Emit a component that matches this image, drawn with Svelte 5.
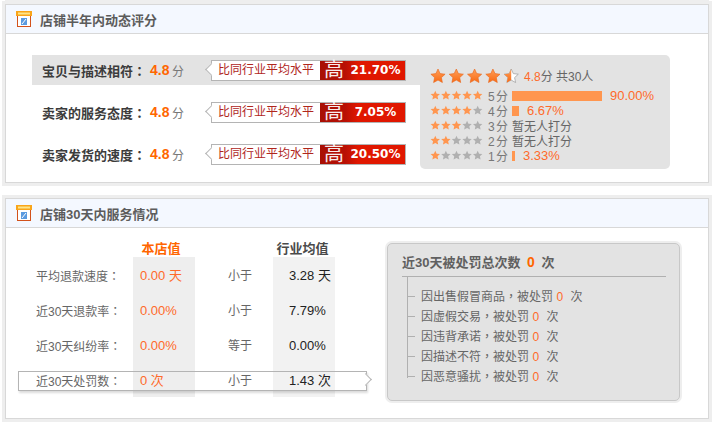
<script>
  const scores = [
    { name: '宝贝与描述相符', rate: '21.70%', active: true },
    { name: '卖家的服务态度', rate: '7.05%' },
    { name: '卖家发货的速度', rate: '20.50%' }
  ];
  const dist = [
    { n: 5, bar: 90, pct: '90.00%' },
    { n: 4, bar: 7, pct: '6.67%' },
    { n: 3 },
    { n: 2 },
    { n: 1, bar: 3, pct: '3.33%' }
  ];
  const stats = [
    { name: '平均退款速度', mine: '0.00 天', cmp: '小于', avg: '3.28 天' },
    { name: '近30天退款率', mine: '0.00%', cmp: '小于', avg: '7.79%' },
    { name: '近30天纠纷率', mine: '0.00%', cmp: '等于', avg: '0.00%' },
    { name: '近30天处罚数', mine: '0 次', cmp: '小于', avg: '1.43 次' }
  ];
  const reasons = ['因出售假冒商品', '因虚假交易', '因违背承诺', '因描述不符', '因恶意骚扰'];
  const star = 'M8 1l2.1 4.6 5 .6-3.7 3.4 1 4.9L8 12.1l-4.4 2.4 1-4.9L.9 6.2l5-.6z';
</script>

{#snippet shopIcon()}
  <svg class="shop" width="16" height="16" viewBox="0 0 16 16">
    <rect x="1.5" y="4.5" width="13" height="11" fill="#fff" stroke="#d2521c" />
    <rect x="0" y="0" width="16" height="5" fill="#f9a51a" />
    <rect x="2" y="1.5" width="12" height="2" fill="#fde58a" />
    <rect x="5" y="7" width="6" height="7" fill="#5a9be0" />
    <path d="M6 13l4-5" stroke="#fff" />
  </svg>
{/snippet}

{#snippet tag(rate)}
  <div class="tag">
    <span class="tag-text">比同行业平均水平</span>
    <span class="tag-red">
      <span class="gao">高</span>
      <span class="rate">{rate}</span>
    </span>
  </div>
{/snippet}

<div class="page">
  <section class="panel first">
    <h2>{@render shopIcon()}店铺半年内动态评分</h2>
    <div class="scores">
      <div class="score-list">
        {#each scores as s}
          <div class="score" class:active={s.active}>
            <span class="score-name">{s.name}<span class="punc">：</span></span>
            <b class="score-num">4.8</b><span class="fen">分</span>
            {@render tag(s.rate)}
          </div>
        {/each}
      </div>
      <div class="dist">
        <div class="dist-head">
          <svg width="92" height="17" viewBox="0 0 92 17">
            <defs>
              <linearGradient id="big" x1="0" y1="0" x2="0" y2="1">
                <stop offset="0" stop-color="#ffa05a" />
                <stop offset="1" stop-color="#f96a14" />
              </linearGradient>
            </defs>
            {#each [0, 1, 2, 3, 4] as i}
              <g transform="translate({i * 18.3} 1)">
                {#if i < 4}
                  <path d={star} fill="url(#big)" stroke="#e8641a" stroke-width=".6" />
                {:else}
                  <path d={star} fill="#fff" stroke="#999" stroke-width=".7" />
                  <path d="M8 1v11.1l-4.4 2.4 1-4.9L.9 6.2l5-.6z" fill="url(#big)" />
                {/if}
              </g>
            {/each}
          </svg>
          <span class="head-text"><em>4.8</em>分 共30人</span>
        </div>
        {#each dist as d}
          <div class="dist-row">
            <svg class="mini" width="53" height="11" viewBox="0 0 53 11">
              {#each [1, 2, 3, 4, 5] as i}
                <path d={star} transform="translate({(i - 1) * 10.6} 0) scale(.66)" fill={i <= d.n ? '#ff9650' : '#b0b0b0'} />
              {/each}
            </svg>
            <span class="dist-n">{d.n} 分</span>
            {#if d.bar}
              <i class="bar" style="width:{d.bar}px"></i>
              <span class="pct">{d.pct}</span>
            {:else}
              <span class="none">暂无人打分</span>
            {/if}
          </div>
        {/each}
      </div>
    </div>
  </section>

  <section class="panel second">
    <h2>{@render shopIcon()}店铺30天内服务情况</h2>
    <div class="service">
      <div class="table">
        <div class="col names">
          <div class="col-head"></div>
          {#each stats as s}<div class="cell">{s.name}<span class="punc">：</span></div>{/each}
        </div>
        <div class="col mine">
          <div class="col-head">本店值</div>
          <div class="col-body">
            {#each stats as s}<div class="cell">{s.mine}</div>{/each}
          </div>
        </div>
        <div class="col cmp">
          <div class="col-head"></div>
          {#each stats as s}<div class="cell">{s.cmp}</div>{/each}
        </div>
        <div class="col avg">
          <div class="col-head">行业均值</div>
          <div class="col-body">
            {#each stats as s}<div class="cell">{s.avg}</div>{/each}
          </div>
        </div>
        <div class="outline"><i></i></div>
      </div>
      <div class="punish-wrap">
        <div class="punish">
          <div class="punish-title">近30天被处罚总次数 <b>0</b> 次</div>
          <ul>
            {#each reasons as r}
              <li>{r}<span class="punc">，</span>被处罚 <em>0</em> 次</li>
            {/each}
          </ul>
        </div>
      </div>
    </div>
  </section>
</div>

<style>
  :global(body) {
    margin: 0;
    background: #fff;
    font-family: "Liberation Sans", "Noto Sans CJK SC", sans-serif;
    font-size: 12px;
    color: #666;
  }
  .page {
    width: 716px;
    height: 425px;
    overflow: hidden;
    padding: 0 0 0 2px;
    box-sizing: border-box;
  }
  .panel {
    width: 704px;
    border: 1px solid #d8d8d8;
    outline: 3px solid #eeeeee;
    margin-left: 3px;
    background: #fff;
    box-sizing: border-box;
  }
  .first {
    height: 179px;
    margin-top: 4px;
    box-shadow: 0 -4px 0 0 #eeeeee;
  }
  .second {
    height: 221px;
    margin-top: 15px;
  }
  h2 {
    display: flex;
    align-items: center;
    height: 28px;
    margin: 0;
    padding-left: 10px;
    background: #f4f8ff;
    border-bottom: 1px solid #d8d8d8;
    font-size: 13px;
    font-weight: bold;
    color: #5c5c5c;
  }
  .shop {
    margin-right: 8px;
  }
  .punc {
    font-family: "Noto Sans CJK TC", sans-serif;
  }

  .scores {
    display: flex;
    padding: 21px 0 0 26px;
  }
  .score-list {
    width: 388px;
    flex: none;
  }
  .score {
    display: flex;
    align-items: center;
    height: 30px;
    margin-bottom: 12px;
    padding-left: 10px;
    color: #3c3c3c;
  }
  .score.active {
    background: #e3e3e3;
  }
  .score-name {
    width: 108px;
    font-size: 13px;
    font-weight: bold;
    white-space: nowrap;
  }
  .score-num {
    width: 22px;
    font-size: 14px;
    color: #ff6600;
  }
  .fen {
    width: 39px;
    color: #777;
  }
  .tag {
    position: relative;
    display: flex;
    width: 195px;
    height: 21px;
    box-sizing: border-box;
    border: 1px solid #b4b4b4;
    background: #fff;
  }
  .tag::before {
    content: "";
    position: absolute;
    left: -5px;
    top: 4px;
    width: 8px;
    height: 8px;
    background: #fff;
    border-left: 1px solid #b4b4b4;
    border-bottom: 1px solid #b4b4b4;
    transform: rotate(45deg);
  }
  .tag-text {
    position: relative;
    width: 108px;
    padding-left: 6px;
    box-sizing: border-box;
    line-height: 19px;
    color: #b0261c;
    white-space: nowrap;
  }
  .tag-red {
    display: flex;
    flex: 1;
    background: linear-gradient(90deg, #a80f04 0, #b81004 25px, #e01700 38px);
    color: #fff;
  }
  .gao {
    width: 28px;
    text-align: center;
    font-size: 20px;
    line-height: 19px;
    opacity: .92;
  }
  .rate {
    flex: 1;
    padding-right: 2px;
    text-align: center;
    font-family: "DejaVu Sans", sans-serif;
    font-size: 12px;
    font-weight: bold;
    line-height: 19px;
  }

  .dist {
    width: 250px;
    height: 114px;
    box-sizing: border-box;
    padding: 8px 0 0 10px;
    background: #e3e3e3;
    border-radius: 0 5px 5px 5px;
  }
  .dist-head {
    display: flex;
    align-items: flex-end;
    height: 21px;
    margin-bottom: 4px;
  }
  .head-text {
    margin-left: 2px;
    font-size: 12px;
    line-height: 14px;
    color: #666;
  }
  .head-text em {
    font-style: normal;
    color: #ff6a2a;
  }
  .dist-row {
    display: flex;
    align-items: center;
    height: 15px;
    font-size: 12px;
    white-space: nowrap;
  }
  .mini {
    width: 53px;
    flex: none;
    margin-right: 5px;
  }
  .dist-n {
    width: 24px;
    flex: none;
    color: #777;
    word-spacing: -2px;
  }
  .bar {
    height: 10px;
    background: #ff964f;
    margin-right: 8px;
  }
  .pct {
    font-size: 13px;
    color: #ff6a2a;
  }
  .none {
    color: #666;
  }

  .service {
    display: flex;
  }
  .table {
    position: relative;
    display: flex;
    width: 381px;
    height: 178px;
    flex: none;
  }
  .col-head {
    height: 29px;
    line-height: 42px;
    text-align: center;
    font-weight: bold;
    font-size: 13px;
    white-space: nowrap;
  }
  .cell {
    height: 35px;
    line-height: 38px;
    white-space: nowrap;
  }
  .names {
    width: 127px;
    padding-left: 30px;
    box-sizing: border-box;
  }
  .mine, .avg {
    width: 62px;
  }
  .mine .col-head {
    padding-right: 6px;
    color: #ff6600;
  }
  .avg .col-head {
    padding-right: 3px;
    color: #4a4a4a;
  }
  .mine .col-body {
    background: #eeeeee;
  }
  .avg .col-body {
    background: #f2f2f2;
  }
  .mine .cell {
    padding-left: 7px;
    font-size: 13px;
    color: #ff6a2a;
  }
  .avg .cell {
    padding-left: 16px;
    font-size: 13px;
    color: #222;
  }
  .cmp {
    width: 78px;
    padding-left: 12px;
    box-sizing: border-box;
    text-align: center;
  }
  .outline {
    position: absolute;
    left: 12px;
    top: 143px;
    width: 349px;
    height: 20px;
    box-sizing: border-box;
    border: 1px solid #b4b4b4;
    box-shadow: 1px 2px 2px rgba(0, 0, 0, .14);
  }
  .outline i {
    position: absolute;
    right: -4px;
    top: 3px;
    width: 8px;
    height: 8px;
    background: #fff;
    border-top: 1px solid #b4b4b4;
    border-right: 1px solid #b4b4b4;
    transform: rotate(45deg);
  }

  .punish-wrap {
    margin-top: 15px;
    height: 158px;
    padding: 0;
  }
  .punish {
    width: 293px;
    height: 158px;
    box-sizing: border-box;
    padding: 0 13px 0 14px;
    background: #e3e3e3;
    border: 1px solid #c8c8c8;
    border-radius: 5px;
    box-shadow: 0 0 0 2px #eee;
  }
  .punish-title {
    height: 32px;
    line-height: 36px;
    border-bottom: 1px solid #b0b0b0;
    font-size: 13px;
    font-weight: bold;
    color: #606060;
  }
  .punish-title b {
    font-size: 14px;
    color: #ff6600;
    margin: 0 3px;
  }
  ul {
    list-style: none;
    margin: 0 0 0 5px;
    padding: 9px 0 0 0;
    border-left: 1px solid #b0b0b0;
    width: 260px;
    height: 92px;
  }
  li {
    position: relative;
    height: 20px;
    line-height: 20px;
    padding-left: 13px;
    color: #666;
  }
  li::before {
    content: "";
    position: absolute;
    left: 0;
    top: 10px;
    width: 7px;
    height: 1px;
    background: #b0b0b0;
  }
  li em {
    font-style: normal;
    color: #ff6a2a;
    margin: 0 4px 0 0;
  }
</style>
